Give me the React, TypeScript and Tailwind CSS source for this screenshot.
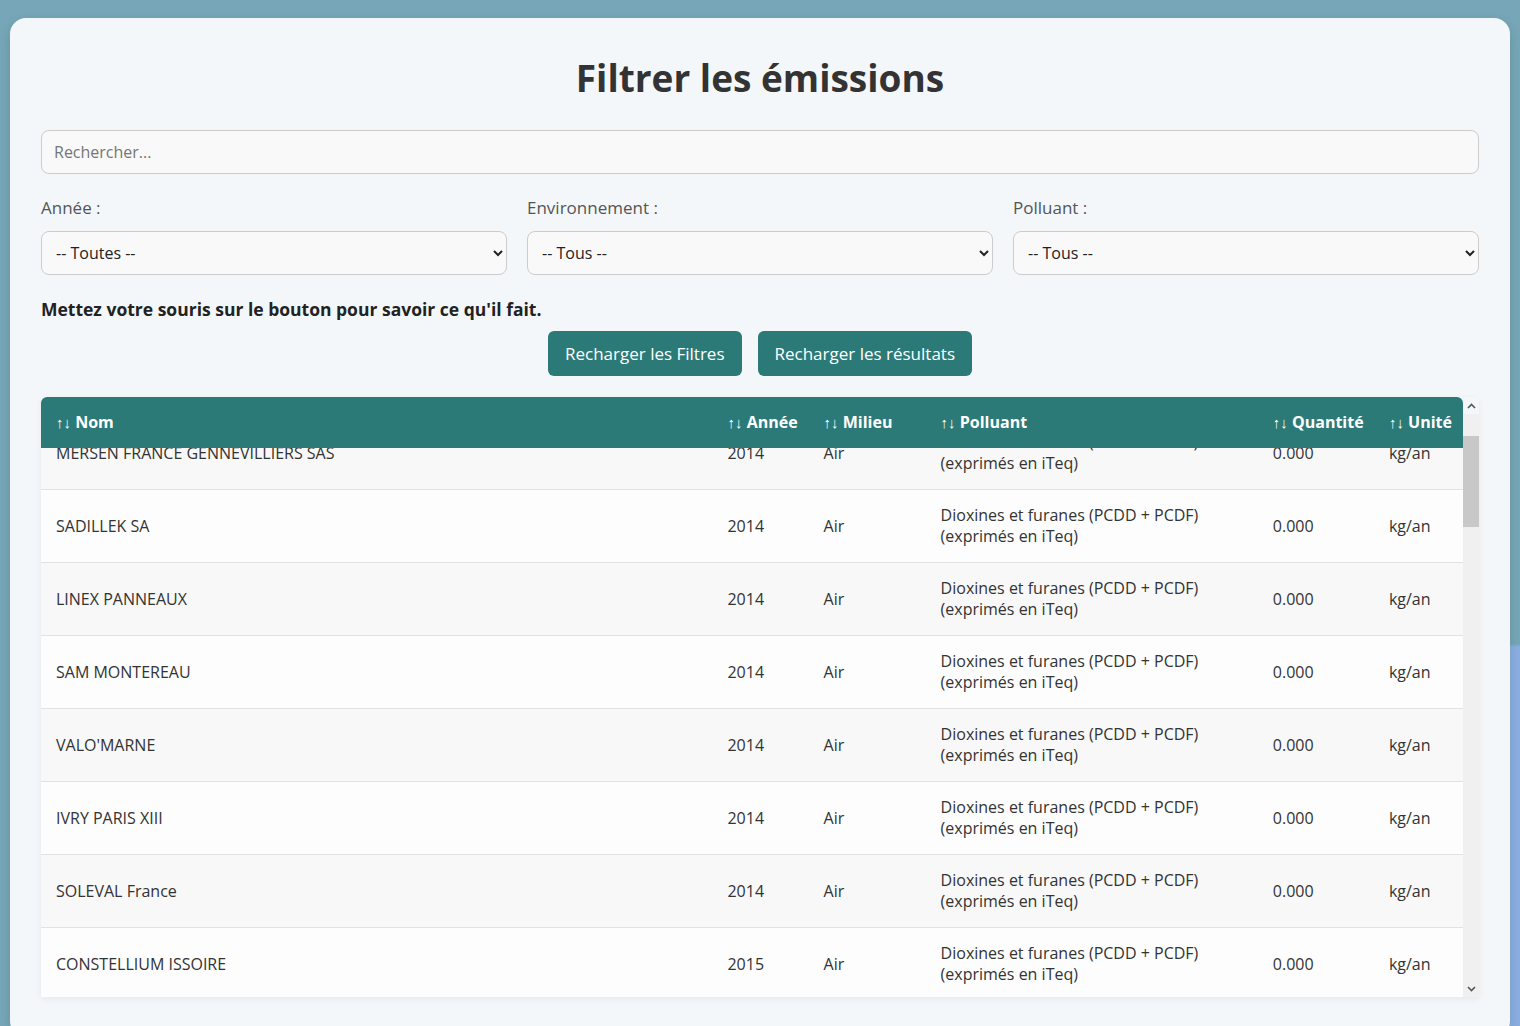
import React, { useLayoutEffect, useRef } from 'react';

const FONT = { fontFamily: '"Open Sans", "Noto Sans", sans-serif' };

const names = [
  'ARCELORMITTAL MEDITERRANEE',
  'SARP INDUSTRIES',
  'MERSEN FRANCE GENNEVILLIERS SAS',
  'SADILLEK SA',
  'LINEX PANNEAUX',
  'SAM MONTEREAU',
  "VALO'MARNE",
  'IVRY PARIS XIII',
  'SOLEVAL France',
  'CONSTELLIUM ISSOIRE',
];

const rows = Array.from({ length: 50 }, (_, i) => ({
  nom: names[i] ?? `ETABLISSEMENT ${i + 1}`,
  annee: i < 9 ? 2014 : 2015,
  milieu: 'Air',
  polluant: 'Dioxines et furanes (PCDD + PCDF) (exprimés en iTeq)',
  quantite: '0.000',
  unite: 'kg/an',
}));

const headers = [
  { label: 'Nom', w: 'w-[671px]' },
  { label: 'Année', w: 'w-[96px]' },
  { label: 'Milieu', w: 'w-[117px]' },
  { label: 'Polluant', w: 'w-[332px]' },
  { label: 'Quantité', w: 'w-[116px]' },
  { label: 'Unité', w: 'w-[89px]' },
];

const Select: React.FC<{ label: string; value: string }> = ({ label, value }) => (
  <div className="flex flex-col">
    <label className="text-[17px] leading-[27px] text-[#555] mb-[10px]">{label}</label>
    <select
      className="h-[44px] w-full rounded-lg border border-[#ccc] bg-[#f9f9f9] px-[10px] text-[16px] text-[#222]"
      style={FONT}
      defaultValue={value}
    >
      <option>{value}</option>
    </select>
  </div>
);

const Chevron: React.FC<{ up?: boolean }> = ({ up }) => (
  <svg width="9" height="6" viewBox="0 0 9 6" className="text-[#555]">
    <path d={up ? 'M1 5 L4.5 1.5 L8 5' : 'M1 1 L4.5 4.5 L8 1'} fill="none" stroke="currentColor" strokeWidth="1.6" />
  </svg>
);

export default function App() {
  const scrollRef = useRef<HTMLDivElement>(null);

  useLayoutEffect(() => {
    if (scrollRef.current) scrollRef.current.scrollTop = 177;
  }, []);

  return (
    <div
      className="min-h-screen bg-[radial-gradient(circle_at_100%_100%,#8aaee0_0,#8aaee0_400px,#76a6b7_403px)] pt-[18px] px-[10px] pb-[10px]"
      style={FONT}
    >
      <div className="rounded-2xl bg-[#f3f7fa] px-[31px] pt-[30px] pb-[40px] shadow-[0_4px_12px_rgba(0,0,0,0.12)] text-[#333]">
        <h1 className="text-center text-[37px] leading-[60px] font-bold text-[#333] mb-[22px]">
          Filtrer les émissions
        </h1>

        <input
          type="text"
          placeholder="Rechercher..."
          className="h-[44px] w-full rounded-lg border border-[#ccc] bg-[#f9f9f9] px-3 text-[16px] placeholder:text-[#767676] outline-none"
          style={FONT}
        />

        <div className="mt-[20px] grid grid-cols-3 gap-5">
          <Select label="Année :" value="-- Toutes --" />
          <Select label="Environnement :" value="-- Tous --" />
          <Select label="Polluant :" value="-- Tous --" />
        </div>

        <p className="mt-[21px] text-[17.5px] leading-[27px] font-bold text-[#222]">
          Mettez votre souris sur le bouton pour savoir ce qu'il fait.
        </p>

        <div className="mt-[8px] flex justify-center gap-4">
          <button className="h-[45px] rounded-md bg-[#2b7a78] px-[17px] text-[17px] text-white">
            Recharger les Filtres
          </button>
          <button className="h-[45px] rounded-md bg-[#2b7a78] px-[17px] text-[17px] text-white">
            Recharger les résultats
          </button>
        </div>

        <div className="mt-[21px] flex h-[600px] shadow-[0_2px_6px_rgba(0,0,0,0.06)]">
          <div
            ref={scrollRef}
            className="flex-1 overflow-y-auto [scrollbar-width:none] [&::-webkit-scrollbar]:hidden"
          >
            <table className="w-full table-fixed border-collapse text-[16px]">
              <thead>
                <tr>
                  {headers.map((h, i) => (
                    <th
                      key={h.label}
                      className={`sticky top-0 z-10 whitespace-nowrap bg-[#2b7a78] px-[15px] py-[15px] text-left leading-[21px] font-bold text-white ${h.w} ${i === 0 ? 'rounded-tl-md' : ''} ${i === 5 ? 'rounded-tr-md' : ''}`}
                    >
                      <span className="font-normal text-[15px]">↑↓</span> {h.label}
                    </th>
                  ))}
                </tr>
              </thead>
              <tbody>
                {rows.map((r, i) => (
                  <tr key={i} className={`border-b border-[#e2e2e2] ${i % 2 === 0 ? 'bg-[#f8f8f8]' : 'bg-[#fdfdfd]'}`}>
                    <td className="px-[15px] py-[15px] leading-[21px] text-[#333]">{r.nom}</td>
                    <td className="px-[15px] py-[15px] leading-[21px] text-[#333]">{r.annee}</td>
                    <td className="px-[15px] py-[15px] leading-[21px] text-[#333]">{r.milieu}</td>
                    <td className="pl-[15px] pr-[25px] py-[15px] leading-[21px] text-[#333]">{r.polluant}</td>
                    <td className="px-[15px] py-[15px] leading-[21px] text-[#333]">{r.quantite}</td>
                    <td className="px-[15px] py-[15px] leading-[21px] text-[#333]">{r.unite}</td>
                  </tr>
                ))}
              </tbody>
            </table>
          </div>
          <div className="flex w-[16px] flex-col bg-[#f0f0f0]">
            <div className="flex h-[17px] items-center justify-center bg-[#f3f7fa]">
              <Chevron up />
            </div>
            <div className="h-[22px]" />
            <div className="h-[91px] bg-[#c8c8c8]" />
            <div className="flex-1" />
            <div className="flex h-[17px] items-center justify-center">
              <Chevron />
            </div>
          </div>
        </div>
      </div>
    </div>
  );
}
